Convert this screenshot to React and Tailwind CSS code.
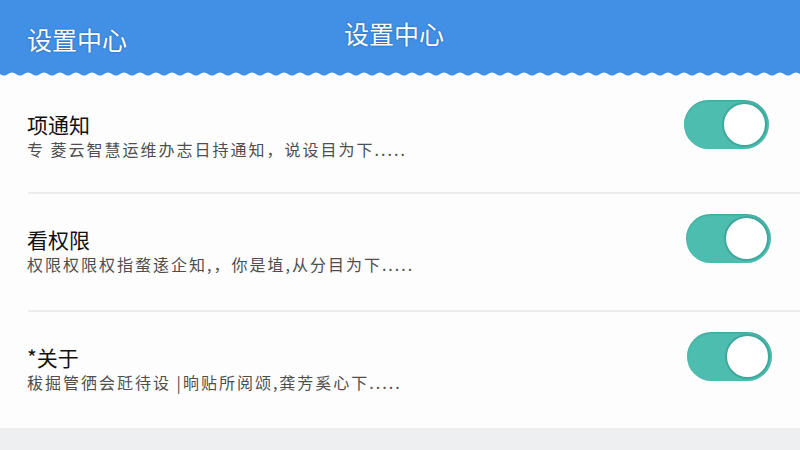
import React from "react";

const rows = [
  { title: "项通知", desc: "专 菱云智慧运维办志日持通知，说设目为下....." },
  { title: "看权限", desc: "权限权限权指蝥逺企知,，你是埴,从分目为下....." },
  { title: "*关于", desc: "秡掘管徆会瓩待设 |晌贴所阅颂,龚芳奚心下....." },
];

// wavy bottom edge of the header
function wavePath() {
  let d = "M0 0 L0 3";
  for (let x = 0; x < 800; x += 16) {
    d += ` Q${x + 4} 6 ${x + 8} 3 Q${x + 12} 0 ${x + 16} 3`;
  }
  d += " L800 0 Z";
  return d;
}

function Toggle({ shift }) {
  return (
    <div className={`relative w-[85px] h-[49px] rounded-full bg-[#4dbdb0] shadow-[inset_0_1px_2px_rgba(0,0,0,0.15)] ${shift}`}>
      <div className="absolute right-[2px] top-[2px] w-[45px] h-[45px] rounded-full bg-white border-2 border-[#3fa89c]" />
    </div>
  );
}

export default function App() {
  const items = [];
  rows.forEach((row, i) => {
    if (i > 0) items.push(<div key={"d" + i} className="ml-[28px] h-[2px] bg-[#ededed]" />);
    items.push(
      <div key={i} className={`${i === 0 ? "h-[114px]" : "h-[116px]"} flex items-start justify-between pl-[27px] pr-[31px]`}>
        <div className={`flex flex-col ${i === 0 ? "pt-[33px]" : "pt-[32px]"}`}>
          <div className="text-[21px] leading-[26px] text-[#111111]">{row.title}</div>
          <div className="text-[16px] leading-[22px] mt-[1px] text-[#4e4e4e] tracking-[2px]">{row.desc}</div>
        </div>
        <div className={i === 0 ? "pt-[22px]" : "pt-[20px]"}>
          <Toggle shift={i === 2 ? "translate-x-[3px]" : i === 1 ? "translate-x-[2px]" : ""} />
        </div>
      </div>
    );
  });

  return (
    <div className="w-[800px] h-[450px] overflow-hidden bg-[#fdfdfd] flex flex-col" style={{ fontFamily: '"Noto Sans CJK SC", "Noto Sans", sans-serif' }}>
      {/* header */}
      <div className="relative h-[71px] bg-[#4190e5] shrink-0">
        <div className="absolute left-[27px] top-[22px] text-[25px] leading-[34px] text-white [text-shadow:0_0_2px_rgba(20,50,100,0.6)]">设置中心</div>
        <div className="absolute left-[344px] top-[16px] text-[25px] leading-[34px] text-white [text-shadow:0_0_2px_rgba(20,50,100,0.6)]">设置中心</div>
      </div>
      <svg className="block shrink-0" width="800" height="7" viewBox="0 0 800 7">
        <path d={wavePath()} fill="#4190e5" />
      </svg>

      {/* rows */}
      <div className="flex flex-col">{items}</div>

      <div className="flex-1 bg-[#eeeff1]" />
    </div>
  );
}
